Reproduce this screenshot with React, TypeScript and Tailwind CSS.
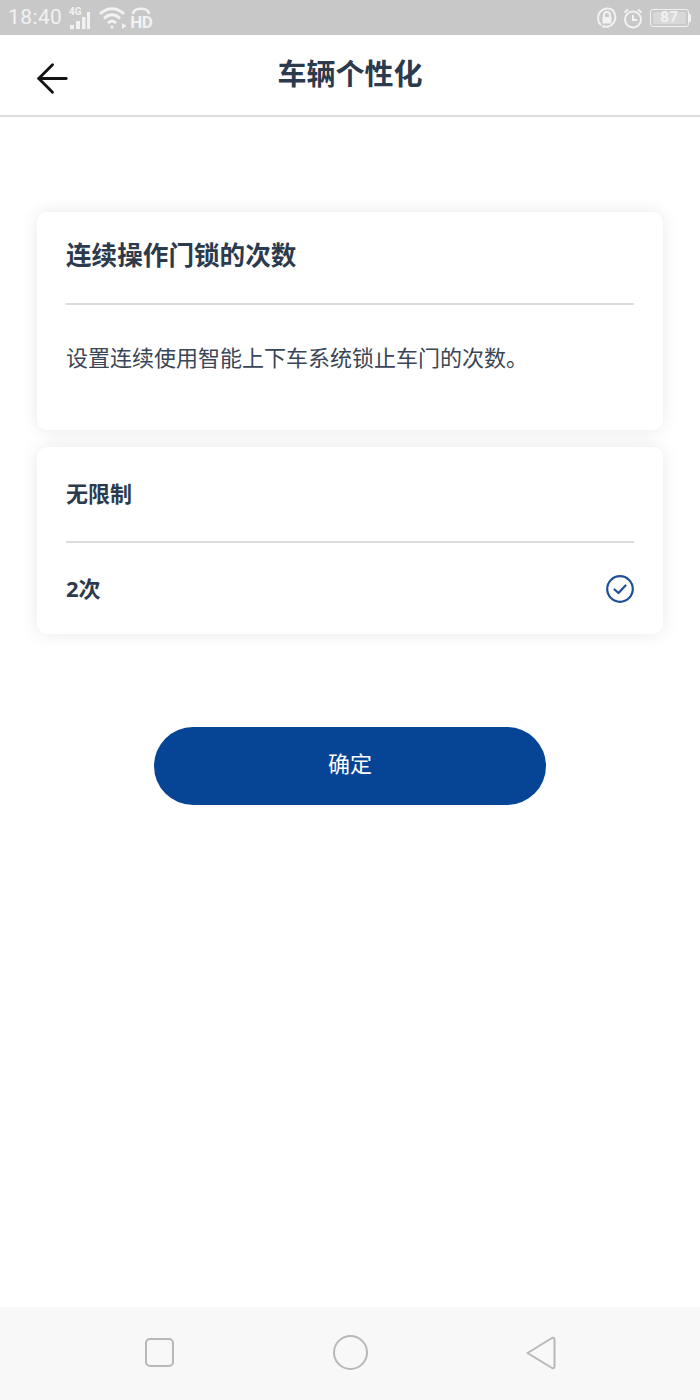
import { ArrowLeft } from "lucide-react"

const font = { fontFamily: '"Noto Sans", "Noto Sans CJK SC", sans-serif' }

const StatusBar = () => (
  <div className="h-[35px] bg-[#c8c8c8] flex items-center justify-between pl-[8px] pr-[9px] text-[#f2f2f2]">
    <div className="flex items-center">
      <span className="text-[21px] leading-none font-['Roboto',sans-serif] tracking-[0.4px]">18:40</span>
      {/* signal */}
      <svg className="ml-[7px]" width="21" height="24" viewBox="0 0 21 24" fill="currentColor">
        <text x="0" y="9" fontSize="10" fontWeight="700" fontFamily="Roboto, sans-serif">4G</text>
        <rect x="1" y="19" width="4" height="4" />
        <rect x="7" y="15" width="4" height="8" />
        <rect x="13" y="11" width="3.5" height="12" />
        <rect x="18" y="6" width="3" height="17" />
      </svg>
      {/* wifi */}
      <svg className="ml-[9px]" width="28" height="24" viewBox="0 0 28 24" fill="none" stroke="currentColor" strokeWidth="2.8">
        <path d="M1 8 C8 1 18 1 25 8" />
        <path d="M5 12.5 C10 7.5 16 7.5 21 12.5" />
        <path d="M9 17 C11.5 14.5 14.5 14.5 17 17" />
        <circle cx="13" cy="21" r="1.6" fill="currentColor" stroke="none" />
        <path d="M23 17 L27.5 20 L23 23 Z" fill="currentColor" stroke="none" />
      </svg>
      {/* hd call */}
      <div className="ml-[4px] flex flex-col items-center leading-none w-[20px]">
        <svg width="20" height="9" viewBox="0 0 20 9" fill="none" stroke="currentColor" strokeWidth="2.6">
          <path d="M2 8 C2 1 18 1 18 8" />
        </svg>
        <span className="text-[17px] leading-[15px] font-bold font-['Roboto',sans-serif] tracking-[-0.5px]">HD</span>
      </div>
    </div>
    <div className="flex items-center">
      {/* rotation lock */}
      <svg width="22" height="22" viewBox="0 0 22 22" fill="none" stroke="currentColor" strokeWidth="2">
        <path d="M5 18 A9.5 9.5 0 0 1 18 4" />
        <path d="M17 4 A9.5 9.5 0 0 1 6 19" />
        <path d="M8 10 V8 a3 3 0 0 1 6 0 V10" />
        <rect x="6.5" y="10" width="9" height="6.5" fill="currentColor" stroke="none" />
      </svg>
      {/* alarm */}
      <svg className="ml-[5px]" width="20" height="22" viewBox="0 0 20 22" fill="none" stroke="currentColor" strokeWidth="2">
        <circle cx="10" cy="12.5" r="8" />
        <path d="M10 8 V13 H14" />
        <path d="M1.5 5.5 L5 2.5 M18.5 5.5 L15 2.5" />
      </svg>
      {/* battery */}
      <div className="ml-[7px] flex items-center">
        <div className="w-[39px] h-[18px] rounded-[3px] border border-[#f2f2f2] p-[2px]">
          <div className="h-full w-full rounded-[2px] bg-[#d8d8d8] flex items-center justify-center text-[15px] font-bold font-['Roboto',sans-serif] tracking-[0.6px] leading-none">87</div>
        </div>
        <div className="w-[2px] h-[8px] bg-[#f2f2f2] rounded-r-[1px]" />
      </div>
    </div>
  </div>
)

const App = () => {
  return (
    <div className="w-[700px] h-[1400px] bg-white flex flex-col overflow-hidden" style={font}>
      <StatusBar />

      {/* Header */}
      <div className="relative h-[82px] border-b-2 border-[#dcdcdc] flex items-center justify-center">
        <ArrowLeft className="absolute left-[29px] top-[20px] w-[47px] h-[47px] text-[#141414]" strokeWidth={1.45} />
        <h1 className="text-[29px] leading-none font-bold text-[#2c3a4d] -mt-[3px]">车辆个性化</h1>
      </div>

      <div className="flex-1 px-[37px] pt-[95px] flex flex-col">
        {/* Description */}
        <div className="h-[218px] bg-white rounded-[10px] shadow-[0_0_18px_rgba(0,0,0,0.09)] px-[29px]">
          <div className="h-[93px] border-b-2 border-[#dcdcdc] flex items-center">
            <h2 className="text-[25.6px] leading-none font-bold text-[#2c3a4d] pb-[3px]">连续操作门锁的次数</h2>
          </div>
          <p className="mt-[38px] text-[22px] leading-[28px] text-[#3a4656]">设置连续使用智能上下车系统锁止车门的次数。</p>
        </div>

        {/* Options */}
        <div className="mt-[17px] h-[187px] bg-white rounded-[10px] shadow-[0_0_18px_rgba(0,0,0,0.09)] px-[29px]">
          <div className="h-[96px] border-b-2 border-[#dcdcdc] flex items-center">
            <span className="text-[22px] leading-none font-bold text-[#2c3a4d] pb-[3px]">无限制</span>
          </div>
          <div className="h-[91px] flex items-center justify-between">
            <span className="text-[22px] leading-none font-bold text-[#2c3a4d] pb-[2px]">2次</span>
            <svg width="28" height="28" viewBox="0 0 28 28" fill="none" stroke="#1f4f94" strokeWidth="2.2">
              <circle cx="14" cy="14" r="12.8" />
              <path d="M8.5 14.5 L12.5 18 L19.5 10.5" strokeLinecap="round" strokeLinejoin="round" />
            </svg>
          </div>
        </div>

        <button className="mt-[93px] self-center w-[392px] h-[78px] rounded-full bg-[#064595] text-white text-[22px] leading-none pb-[7px]">
          确定
        </button>
      </div>

      {/* Android nav */}
      <div className="h-[93px] bg-[#f8f8f8] flex items-center pb-[2px]">
        <div className="w-full flex items-center justify-between pl-[145px] pr-[144px]">
          <div className="w-[29px] h-[29px] rounded-[5px] border-2 border-[#b8b8b8]" />
          <div className="w-[35px] h-[35px] rounded-full border-2 border-[#b8b8b8]" />
          <svg width="30" height="34" viewBox="0 0 30 34" fill="none" stroke="#b8b8b8" strokeWidth="2" strokeLinejoin="round">
            <path d="M1.5 17 L26 2 Q28.5 1 28.5 4 V30 Q28.5 33 26 32 Z" />
          </svg>
        </div>
      </div>
    </div>
  )
}

export default App
